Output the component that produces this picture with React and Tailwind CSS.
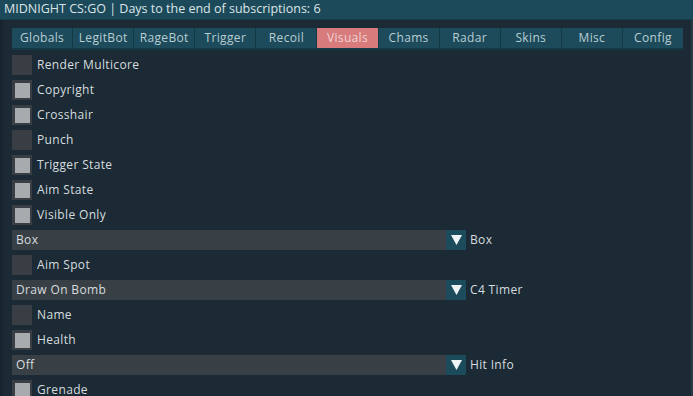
import React from 'react';

const TABS = ['Globals', 'LegitBot', 'RageBot', 'Trigger', 'Recoil', 'Visuals', 'Chams', 'Radar', 'Skins', 'Misc', 'Config'];

const ROWS = [
  { type: 'check', label: 'Render Multicore', on: false },
  { type: 'check', label: 'Copyright', on: true },
  { type: 'check', label: 'Crosshair', on: true },
  { type: 'check', label: 'Punch', on: false },
  { type: 'check', label: 'Trigger State', on: true },
  { type: 'check', label: 'Aim State', on: true },
  { type: 'check', label: 'Visible Only', on: true },
  { type: 'combo', value: 'Box', label: 'Box' },
  { type: 'check', label: 'Aim Spot', on: false },
  { type: 'combo', value: 'Draw On Bomb', label: 'C4 Timer' },
  { type: 'check', label: 'Name', on: false },
  { type: 'check', label: 'Health', on: true },
  { type: 'combo', value: 'Off', label: 'Hit Info' },
  { type: 'check', label: 'Grenade', on: true }
];

function Check({ label, on }) {
  return (
    <div className="flex items-center h-[20px] gap-[5px]">
      <div className="w-[20px] h-[20px] bg-[#383e43] flex items-center justify-center">
        {on ? <div className="w-[15px] h-[15px] bg-[#a7abad]" /> : null}
      </div>
      <span>{label}</span>
    </div>
  );
}

function Combo({ value, label }) {
  return (
    <div className="flex items-center h-[20px]">
      <div className="w-[434px] h-full bg-[#394045] pl-[4px] flex items-center">{value}</div>
      <div className="w-[20px] h-full bg-[#1c4b5b] flex items-center justify-center">
        <svg width="11" height="10" viewBox="0 0 11 10">
          <polygon points="0,0 11,0 5.5,10" fill="#eef3f5" />
        </svg>
      </div>
      <span className="ml-[4px]">{label}</span>
    </div>
  );
}

export default function App() {
  return (
    <div
      className="w-[693px] h-[396px] overflow-hidden bg-[#1b2a35] text-[12px] tracking-[0.35px] text-[#d6dcdf] flex flex-col"
      style={{ fontFamily: '"Open Sans", "Liberation Sans", sans-serif' }}
    >
      <div className="h-[20px] shrink-0 bg-[#1c4a5a] pl-[4px] flex items-center text-[#dce4e7] text-[12.5px] tracking-normal border-b border-[#173d4a]">
        MIDNIGHT CS:GO | Days to the end of subscriptions: 6
      </div>
      <div className="flex-1 flex border-l-[3px] border-[#16242d] border-r-[2px] border-r-[#2a3a44]">
        <div className="flex-1 pl-[9px] pt-[8px]">
          <div className="flex w-[671px] border-b-2 border-[#143844] bg-[#143844] gap-px">
            {TABS.map((t) => (
              <div
                key={t}
                className={
                  'flex-1 h-[20px] flex items-center justify-center ' +
                  (t === 'Visuals' ? 'bg-[#d77b7d] text-[#f1d2d3]' : 'bg-[#1d4b5b] text-[#b9cdd3]')
                }
              >
                {t}
              </div>
            ))}
          </div>
          <div className="flex flex-col gap-[5px] pt-[5px]">
            {ROWS.map((r, i) =>
              r.type === 'check' ? (
                <Check key={i} label={r.label} on={r.on} />
              ) : (
                <Combo key={i} value={r.value} label={r.label} />
              )
            )}
          </div>
        </div>
      </div>
    </div>
  );
}
